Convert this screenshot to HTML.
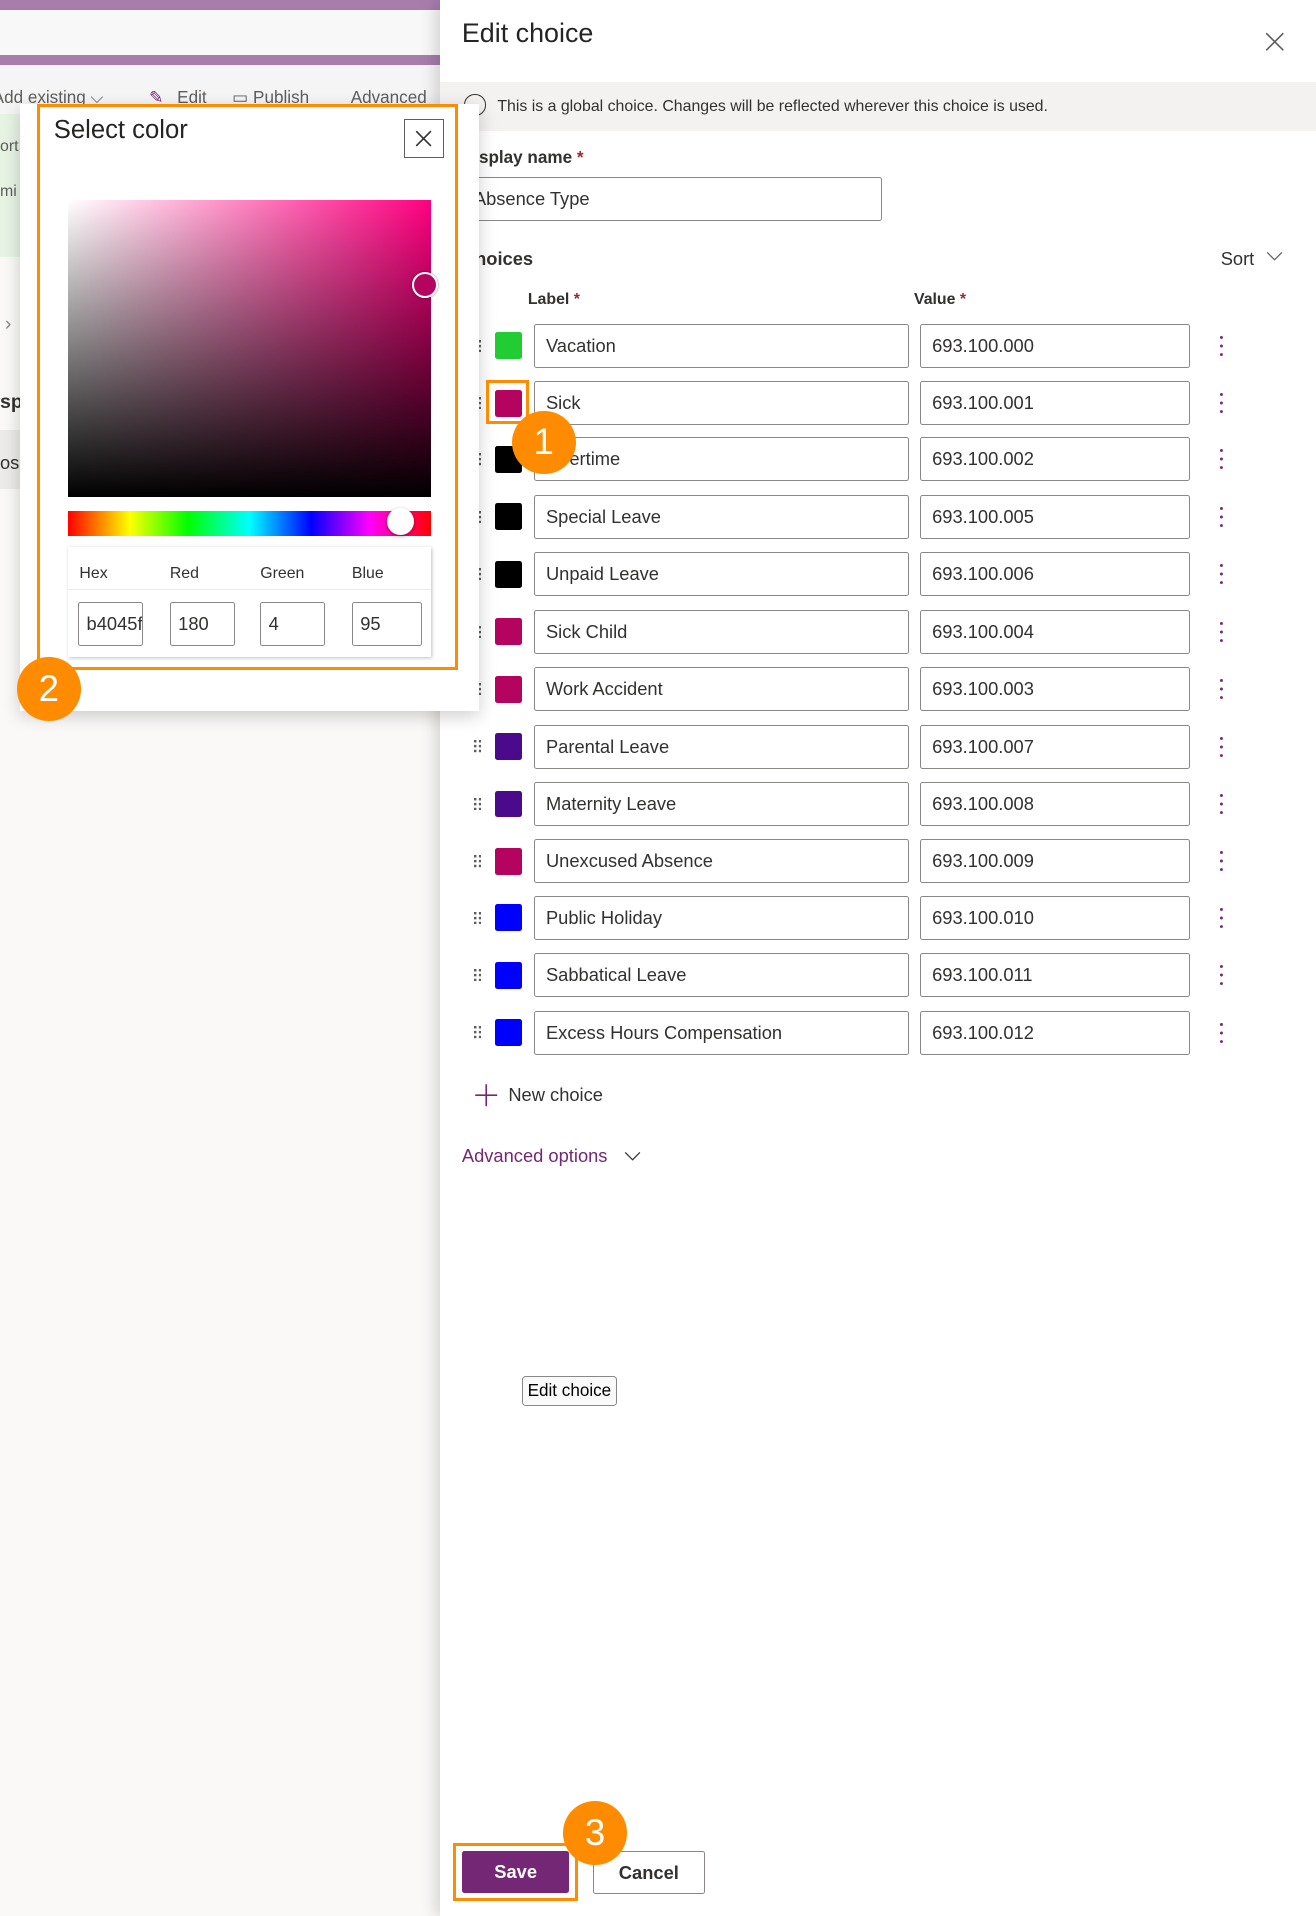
<!DOCTYPE html>
<html><head><meta charset="utf-8">
<style>
html,body{margin:0;padding:0;}
body{width:1316px;height:1916px;overflow:hidden;background:#fff;}
#r{zoom:1.22191;width:1077px;height:1568px;position:relative;overflow:hidden;font-family:"Liberation Sans",sans-serif;color:#323130;}
.a{position:absolute;}
.inp{position:absolute;border:1px solid #8a8886;border-radius:2px;background:#fff;box-sizing:border-box;font-size:15px;padding-left:9px;display:flex;align-items:center;color:#323130;}
.sw{position:absolute;width:22px;height:22px;border-radius:2px;}
.badge{position:absolute;width:52px;height:52px;border-radius:50%;background:#ff8c00;color:#fff;font-size:30px;display:flex;align-items:center;justify-content:center;}
</style></head><body><div id="r">
<div class="a" style="left:0;top:0;width:360px;height:1568px;background:#faf9f8"></div>
<div class="a" style="left:0;top:0;width:360px;height:8px;background:#a77dac"></div>
<div class="a" style="left:0;top:8px;width:360px;height:37px;background:#f8f8f8"></div>
<div class="a" style="left:0;top:45px;width:360px;height:8px;background:#a77dac"></div>
<div class="a" style="left:0;top:53px;width:360px;height:40px;background:#f5f5f5;font-size:14px;color:#605e5c;white-space:nowrap"><span class="a" style="left:-6px;top:19px">Add existing ⌵</span><span class="a" style="left:122px;top:19px;color:#742774">✎</span><span class="a" style="left:145px;top:19px">Edit</span><span class="a" style="left:190px;top:19px">▭ Publish</span><span class="a" style="left:287px;top:19px">Advanced</span></div>
<div class="a" style="left:0;top:93px;width:20px;height:117px;background:#e7f4e4"></div>
<div class="a" style="left:0;top:113px;font-size:13px;color:#605e5c">ort</div>
<div class="a" style="left:0;top:150px;font-size:13px;color:#605e5c">mi</div>
<div class="a" style="left:4px;top:256px;font-size:16px;color:#8a8886">›</div>
<div class="a" style="left:0;top:320px;font-size:16px;font-weight:bold">spl</div>
<div class="a" style="left:0;top:352px;width:20px;height:48px;background:#edebe9"></div>
<div class="a" style="left:0;top:370px;font-size:15px">ose</div>
<div class="a" style="left:360px;top:0;width:717px;height:1568px;background:#fff;box-shadow:-4px 0 12px rgba(0,0,0,.15)"></div>
<div class="a" style="left:378px;top:15px;font-size:22px;color:#252423">Edit choice</div>
<svg class="a" style="left:1035px;top:26px" width="16" height="16"><path d="M1 1L15 15M15 1L1 15" stroke="#605e5c" stroke-width="1.3"/></svg>
<div class="a" style="left:360px;top:67px;width:717px;height:40px;background:#f3f2f1"></div>
<div class="a" style="left:407px;top:80px;font-size:13px;color:#323130">This is a global choice. Changes will be reflected wherever this choice is used.</div>
<div class="a" style="left:380px;top:77px;width:16px;height:16px;border:1px solid #323130;border-radius:50%"></div>
<div class="a" style="left:378px;top:121px;font-size:14px;font-weight:bold">Display name <span style="color:#a4262c">*</span></div>
<div class="inp" style="left:378px;top:145px;width:344px;height:36px">Absence Type</div>
<div class="a" style="left:378px;top:203px;font-size:15px;font-weight:bold">Choices</div>
<div class="a" style="left:999px;top:203px;font-size:15px">Sort</div>
<svg class="a" style="left:1036px;top:205px" width="14" height="10"><path d="M1 2L7 8L13 2" stroke="#605e5c" fill="none"/></svg>
<div class="a" style="left:432px;top:238px;font-size:13px;font-weight:bold">Label <span style="color:#a4262c">*</span></div>
<div class="a" style="left:748px;top:238px;font-size:13px;font-weight:bold">Value <span style="color:#a4262c">*</span></div>

<div id="rows"></div>

<svg class="a" style="left:388px;top:886px" width="20" height="20"><path d="M10 1V19M1 10H19" stroke="#742774" stroke-width="1.3"/></svg>
<div class="a" style="left:416px;top:887px;font-size:15px">New choice</div>
<div class="a" style="left:378px;top:937px;font-size:15px;color:#742774">Advanced options</div>
<svg class="a" style="left:511px;top:941px" width="14" height="10"><path d="M1 2L7 8L13 2" stroke="#323130" fill="none"/></svg>
<div class="a" style="left:427px;top:1126px;width:78px;height:25px;border:1px solid #8a8886;border-radius:3px;box-sizing:border-box;font-size:14px;display:flex;align-items:center;justify-content:center;background:#fafafa;color:#000">Edit choice</div>

<div class="a" style="left:371px;top:1508px;width:102px;height:48px;border:3px solid #ff8c00;box-sizing:border-box"></div>
<div class="a" style="left:378px;top:1515px;width:88px;height:34px;background:#742774;border-radius:2px;color:#fff;font-size:15px;font-weight:bold;display:flex;align-items:center;justify-content:center">Save</div>
<div class="a" style="left:485px;top:1515px;width:92px;height:35px;border:1px solid #8a8886;border-radius:2px;box-sizing:border-box;font-size:15px;font-weight:bold;display:flex;align-items:center;justify-content:center">Cancel</div>
<div class="badge" style="left:461px;top:1474px">3</div>

<div class="a" style="left:16px;top:85px;width:376px;height:497px;background:#fff;box-shadow:0 4px 14px rgba(0,0,0,.2)"></div>
<div class="a" style="left:30px;top:85px;width:345px;height:463px;border:3px solid #ff8c00;box-sizing:border-box"></div>
<div class="a" style="left:44px;top:95px;font-size:21px;color:#252423">Select color</div>
<div class="a" style="left:331px;top:97px;width:32px;height:32px;border:1px solid #605e5c;box-sizing:border-box"></div>
<svg class="a" style="left:340px;top:106px" width="14" height="14"><path d="M1 1L13 13M13 1L1 13" stroke="#323130" stroke-width="1.3"/></svg>
<div class="a" style="left:56px;top:164px;width:297px;height:243px;background:linear-gradient(to top,#000,rgba(0,0,0,0)),linear-gradient(to right,#fff,#ff0080)"></div>
<div class="a" style="left:337px;top:223px;width:18px;height:18px;border:2px solid #fff;border-radius:50%;background:#b4045f;box-shadow:0 0 2px rgba(0,0,0,.5)"></div>
<div class="a" style="left:56px;top:418px;width:297px;height:21px;background:linear-gradient(to right,#f00,#ff0 17%,#0f0 33%,#0ff 50%,#00f 67%,#f0f 83%,#f00)"></div>
<div class="a" style="left:317px;top:416px;width:22px;height:22px;border-radius:50%;background:#fff;box-shadow:0 1px 3px rgba(0,0,0,.4)"></div>
<div class="a" style="left:56px;top:448px;width:297px;height:90px;background:#fff;box-shadow:1px 1px 3px rgba(0,0,0,.25)"></div>
<div class="a" style="left:56px;top:482px;width:297px;height:1px;background:#edebe9"></div>
<div class="a" style="left:65px;top:462px;font-size:13px">Hex</div>
<div class="a" style="left:139px;top:462px;font-size:13px">Red</div>
<div class="a" style="left:213px;top:462px;font-size:13px">Green</div>
<div class="a" style="left:288px;top:462px;font-size:13px">Blue</div>
<div class="inp" style="left:64px;top:493px;width:53px;height:36px;padding-left:6px;overflow:hidden;white-space:nowrap">b4045f</div>
<div class="inp" style="left:139px;top:493px;width:53px;height:36px;padding-left:6px">180</div>
<div class="inp" style="left:213px;top:493px;width:53px;height:36px;padding-left:6px">4</div>
<div class="inp" style="left:288px;top:493px;width:57px;height:36px;padding-left:6px">95</div>
<div class="badge" style="left:14px;top:538px">2</div>

<div class="a" style="left:398px;top:311px;width:35px;height:36px;border:3px solid #ff8c00;box-sizing:border-box"></div>
<div class="badge" style="left:419px;top:336px">1</div>
</div>
<script>
var d=[["Vacation","000","#22cc33"],["Sick","001","#b4045f"],["Overtime","002","#000"],["Special Leave","005","#000"],["Unpaid Leave","006","#000"],["Sick Child","004","#b4045f"],["Work Accident","003","#b4045f"],["Parental Leave","007","#4b0a8c"],["Maternity Leave","008","#4b0a8c"],["Unexcused Absence","009","#b4045f"],["Public Holiday","010","#0000ff"],["Sabbatical Leave","011","#0000ff"],["Excess Hours Compensation","012","#0000ff"]];
var tops=[265,312,358,405,452,499,546,593,640,687,733,780,827],h="";
var dr='<rect x="0" y="0" width="2" height="2"/><rect x="4" y="0" width="2" height="2"/><rect x="0" y="4" width="2" height="2"/><rect x="4" y="4" width="2" height="2"/><rect x="0" y="8" width="2" height="2"/><rect x="4" y="8" width="2" height="2"/>';
d.forEach(function(r,i){var t=tops[i];
h+='<svg class="a" style="left:388px;top:'+(t+13)+'px" width="6" height="10" fill="#605e5c">'+dr+'</svg>';
h+='<div class="sw" style="left:405px;top:'+(t+7)+'px;background:'+r[2]+'"></div>';
h+='<div class="inp" style="left:437px;top:'+t+'px;width:307px;height:36px">'+r[0]+'</div>';
h+='<div class="inp" style="left:753px;top:'+t+'px;width:221px;height:36px">693.100.'+r[1]+'</div>';
h+='<svg class="a" style="left:998px;top:'+(t+9)+'px" width="4" height="18" fill="#742774"><circle cx="2" cy="2" r="1.2"/><circle cx="2" cy="9" r="1.2"/><circle cx="2" cy="16" r="1.2"/></svg>';});
document.getElementById("rows").outerHTML=h;
</script>
</body></html>
